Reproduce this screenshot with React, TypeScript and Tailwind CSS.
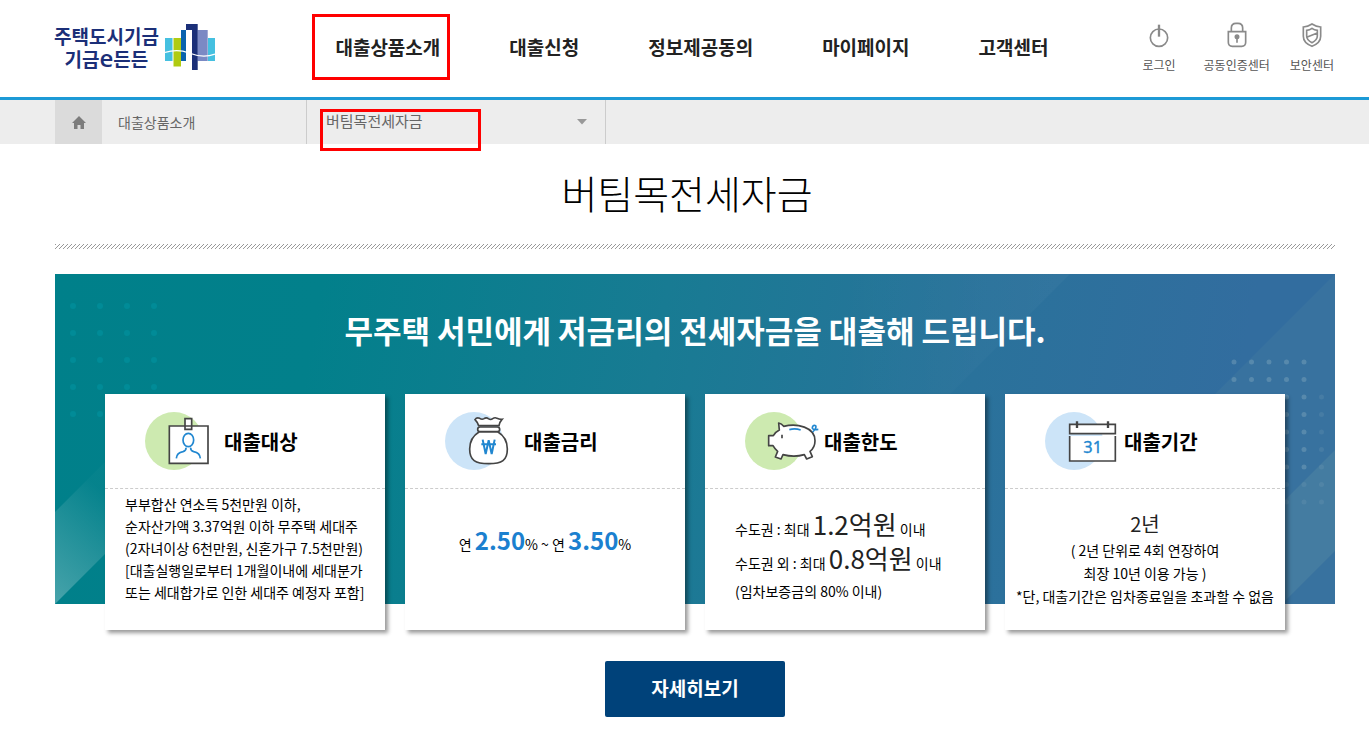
import React from "react";

const NAV_ITEMS = ["대출상품소개", "대출신청", "정보제공동의", "마이페이지", "고객센터"];

const LEFT_DOTS = [0, 1, 2, 3, 4].flatMap((row) =>
  [0, 1, 2, 3].map((col) => ({ x: 18 + col * 27, y: 32 + row * 27 }))
);

const RIGHT_DOTS = [0, 1, 2, 3, 4, 5, 6, 7, 8].flatMap((row) =>
  [0, 1, 2, 3, 4, 5]
    .filter((col) => row > 1 || col < 5)
    .map((col) => ({ x: 399 + col * 17.5, y: 88 + row * 17.5 }))
);

const Logo = () => (
  <a href="#" className="flex items-center gap-1.5 pb-0.5 text-[#1b2f78]">
    <span className="flex flex-col items-center text-[19px] font-bold leading-[23px]">
      <span>주택도시기금</span>
      <span className="flex items-center">
        기금
        <span className="font-['Open_Sans'] text-2xl leading-5 font-semibold">e</span>
        든든
      </span>
    </span>
    <svg viewBox="0 0 50 46" className="w-[50px] h-[46px]" aria-hidden="true">
      <path fill="#45c0e0" d="M0 14h7.5v23H0zM43 14h7v23h-7z" />
      <path fill="#b0cb12" d="M8.5 14H16v28.5H8.5z" />
      <path fill="#0a63ae" d="M16 6h5v31h-5z" />
      <path fill="#7b89c4" d="M32.5 6h10.2v31H32.5z" />
      <path fill="#1b2f78" d="M21 0h11.7v46H27V6h-6z" />
      <path
        fill="none"
        stroke="#fff"
        strokeWidth="1.3"
        d="M0 28.5c8-2.5 15-3 24 .5s17 4.5 26 1"
      />
    </svg>
  </a>
);

type TUtilLink = {
  label: string;
  children: React.ReactNode;
};

const UtilLink = ({ label, children }: TUtilLink) => (
  <a href="#" className="flex flex-col items-center gap-2 text-xs leading-[18px] text-[#555]">
    <svg
      viewBox="0 0 60 78"
      className="w-5 h-[26px]"
      fill="none"
      stroke="#8a8a8a"
      strokeWidth="5"
      aria-hidden="true"
    >
      {children}
    </svg>
    {label}
  </a>
);

const Header = () => (
  <header className="border-b-3 border-[#1c9ad6]">
    <div className="flex items-center h-[97px] pl-[54px] pr-[35px] pb-0.5">
      <Logo />
      <nav className="flex items-center gap-[69px] ml-auto text-[19px] font-bold text-[#222] whitespace-nowrap">
        {NAV_ITEMS.map((item, index) => (
          <a key={item} href="#" className="relative">
            {item}
            {index === 0 && (
              <span className="absolute -left-[23px] -right-2.5 -top-[19px] -bottom-[18px] border-3 border-[#f00]" />
            )}
          </a>
        ))}
      </nav>
      <div className="flex ml-[94px] whitespace-nowrap">
        <UtilLink label="로그인">
          <circle cx="30" cy="47" r="26" />
          <path strokeWidth="7" d="M30 8v36" />
        </UtilLink>
        <div className="ml-7 mr-5">
          <UtilLink label="공동인증센터">
            <path d="M4 29h52v32q0 12-12 12H16Q4 73 4 61z" />
            <path d="M13 29V18Q13 4 27 4h6q14 0 14 14v11" />
            <circle cx="30" cy="44" r="5" fill="#8a8a8a" />
            <path d="M30 44v18" />
          </UtilLink>
        </div>
        <UtilLink label="보안센터">
          <path d="M30 6Q18 14 4 15v28q0 20 26 30 26-10 26-30V15Q42 14 30 6z" />
          <path d="M30 19q-7 5-16 6v17q0 12 16 20 16-8 16-20V25q-9-1-16-6zM14 46l32-13" />
        </UtilLink>
      </div>
    </div>
  </header>
);

const Breadcrumb = () => (
  <nav className="flex h-11 pl-[55px] bg-[#ededed] text-[#666]">
    <a href="#" aria-label="홈" className="flex items-center justify-center w-[47px] bg-[#dbdbdb]">
      <svg viewBox="0 0 14 13" className="w-3.5 h-[13px]" fill="#7c7c7c" aria-hidden="true">
        <path d="M7 0 14 7H12v6H8.5V9h-3v4H2V7H0z" />
      </svg>
    </a>
    <a
      href="#"
      className="flex items-center w-[205px] px-4 border-r border-[#ccc] text-sm"
    >
      대출상품소개
    </a>
    <div className="relative w-[299px] border-r border-[#ccc]">
      <select
        aria-label="대출상품"
        className="w-full h-full pl-[19px] pb-0.5 appearance-none bg-transparent text-[15px]"
      >
        <option>버팀목전세자금</option>
      </select>
      <svg
        viewBox="0 0 10 6"
        className="absolute right-[18px] top-[19px] w-2.5 h-1.5 pointer-events-none"
        fill="#999"
        aria-hidden="true"
      >
        <path d="M0 0h10L5 5.5z" />
      </svg>
      <span className="absolute left-[13px] top-[9px] w-[161px] h-[42px] border-3 border-[#f00] pointer-events-none" />
    </div>
  </nav>
);

const StripeDivider = () => (
  <svg className="block w-full h-[5px]" aria-hidden="true">
    <defs>
      <pattern id="stripes" width="4" height="5" patternUnits="userSpaceOnUse">
        <path
          fill="#999"
          d="M0 0h1v1H0zM3 1h1v1H3zM2 2h1v1H2zM1 3h1v1H1zM0 4h1v1H0z"
        />
      </pattern>
    </defs>
    <rect width="100%" height="5" fill="url(#stripes)" />
  </svg>
);

const BannerBackdrop = () => (
  <div
    className="absolute inset-0 overflow-hidden bg-linear-[100deg,#00808a_0%,#02808b_20%,#187b93_46%,#2a729b_70%,#326d9f_90%,#326d9f_100%]"
    aria-hidden="true"
  >
    <svg className="absolute left-0 top-0 w-[330px] h-[330px]" viewBox="0 0 330 330">
      <defs>
        <linearGradient id="wedge" x1="0" y1="1" x2="0.4" y2="0">
          <stop offset="0" stopColor="#fff" stopOpacity="0.28" />
          <stop offset="0.8" stopColor="#fff" stopOpacity="0.02" />
        </linearGradient>
      </defs>
      <path fill="url(#wedge)" d="M0 238 75 163V255L0 330z" />
      {LEFT_DOTS.map(({ x, y }) => (
        <circle key={`${x}-${y}`} cx={x} cy={y} r="3" fill="#018b97" />
      ))}
    </svg>
    <svg className="absolute right-0 top-0 w-[500px] h-[330px]" viewBox="0 0 500 330">
      <defs>
        <linearGradient id="sheen">
          <stop offset="0" stopColor="#fff" stopOpacity="0" />
          <stop offset="1" stopColor="#fff" stopOpacity="0.03" />
        </linearGradient>
      </defs>
      <path fill="url(#sheen)" d="M0 0h235L115 120H0z" />
      <path fill="#6fa0a8" fillOpacity="0.12" d="M500 0v330H170z" />
      <path fill="#8fc0b0" fillOpacity="0.14" d="M500 176v101l-53 53H346z" />
      {RIGHT_DOTS.map(({ x, y }) => (
        <circle
          key={`${x}-${y}`}
          cx={x}
          cy={y}
          r="2.5"
          fill="#a9c6d0"
          fillOpacity={x > 480 || y > 200 ? 0.12 : 0.28}
        />
      ))}
    </svg>
  </div>
);

type TCard = {
  title: string;
  tint: string;
  icon: React.ReactNode;
  children: React.ReactNode;
};

const Card = ({ title, tint, icon, children }: TCard) => (
  <article className="flex flex-col flex-1 h-[236px] bg-white shadow-[3px_3px_4px_rgba(0,0,0,0.4)] text-sm text-black whitespace-nowrap">
    <div className="flex items-center h-[95px] pl-10 border-b border-dashed border-[#ccc]">
      <svg
        viewBox="135 66 237 174"
        className="w-[79px] h-[58px]"
        fill="#fff"
        stroke="#444"
        strokeWidth="5"
        aria-hidden="true"
      >
        <circle cx="222" cy="153" r="87" fill={tint} stroke="none" />
        {icon}
      </svg>
      <h3 className="pt-0.5 text-xl font-bold">{title}</h3>
    </div>
    {children}
  </article>
);

const PersonIcon = () => (
  <>
    <path d="M208 108h116v112H208zM255 86h20v32h-20z" />
    <g fill="none" stroke="#2187d0">
      <ellipse cx="265" cy="150" rx="16" ry="20" />
      <path d="M258 173q1 9-9 12-19 4-20 20M272 173q-1 9 9 12 19 4 20 20" />
    </g>
  </>
);

const MoneyBagIcon = () => (
  <>
    <path d="M236 107Q233 97 225 89q5-8 14-4 7 5 13 1 7-5 13 0 7 5 13 0 7-5 13-1 8 4 15 3-8 9-9 19z" />
    <path d="M238 125c-20 12-29 29-29 52 0 34 17 44 57 44s56-10 56-44c0-23-9-40-29-52z" />
    <rect x="233" y="111" width="66" height="14" rx="7" />
    <path
      fill="none"
      stroke="#2187d0"
      strokeWidth="6"
      d="M248 149l9 43 9-41 9 41 9-43M244 163h44"
    />
  </>
);

const PiggyIcon = () => (
  <>
    <path
      strokeLinejoin="round"
      d="M206 137h14q6-11 18-17l-2-21q9 2 15 10c40-10 94 2 94 43 0 14-6 25-15 32l7 16-17 7-7-13q-31 9-64 0l-6 13-17-6 7-17q-9-8-14-17h-13z"
    />
    <path d="M246 134v11" />
    <path
      fill="none"
      stroke="#2187d0"
      d="M268 119q17-5 34 1M338 126q13-13 9-19-7-3-10 5-2 9 18 6"
    />
  </>
);

const CalendarIcon = () => (
  <>
    <path d="M209 103h137v28H209zM209 138v75h137v-75" />
    <path d="M231 94v20M324 94v20" strokeWidth="7" />
    <text
      x="278"
      y="190"
      textAnchor="middle"
      fontSize="49"
      className="font-['Noto_Sans']"
      fill="#2187d0"
      stroke="#2187d0"
      strokeWidth="1"
    >
      31
    </text>
  </>
);

const Banner = () => (
  <section className="relative mt-[25px] h-[330px]">
    <BannerBackdrop />
    <div className="relative">
      <h2 className="flex items-center justify-center h-[120px] pb-2 text-[31px] font-bold text-white">
        무주택 서민에게 저금리의 전세자금을 대출해 드립니다.
      </h2>
      <div className="flex gap-5 px-[50px]">
        <Card title="대출대상" tint="#cdeab0" icon={<PersonIcon />}>
          <p className="pl-5 pt-1 leading-[22px]">
            부부합산 연소득 5천만원 이하,
            <br />
            순자산가액 3.37억원 이하 무주택 세대주
            <br />
            (2자녀이상 6천만원, 신혼가구 7.5천만원)
            <br />
            [대출실행일로부터 1개월이내에 세대분가
            <br />
            또는 세대합가로 인한 세대주 예정자 포함]
          </p>
        </Card>
        <Card title="대출금리" tint="#cce4f8" icon={<MoneyBagIcon />}>
          <p className="pt-[35px] text-center">
            연 <strong className="text-2xl text-[#1b80cf]">2.50</strong>% ~ 연{" "}
            <strong className="text-2xl text-[#1b80cf]">3.50</strong>%
          </p>
        </Card>
        <Card title="대출한도" tint="#cdeab0" icon={<PiggyIcon />}>
          <p className="pl-[30px] pt-[22px] leading-[31px]">
            수도권 : 최대 <span className="text-[26px] leading-none text-[#222]">1.2억원</span> 이내
            <br />
            수도권 외 : 최대 <span className="text-[26px] leading-none text-[#222]">0.8억원</span>{" "}
            이내
            <span className="block leading-6">(임차보증금의 80% 이내)</span>
          </p>
        </Card>
        <Card title="대출기간" tint="#cce4f8" icon={<CalendarIcon />}>
          <p className="pt-5 text-center leading-[23px]">
            <span className="block text-xl text-[#222] leading-[30px]">2년</span>
            ( 2년 단위로 4회 연장하여
            <br />
            최장 10년 이용 가능 )
            <br />
            *단, 대출기간은 임차종료일을 초과할 수 없음
          </p>
        </Card>
      </div>
    </div>
  </section>
);

const App = () => {
  return (
    <div className="min-h-screen bg-white font-['Noto_Sans_CJK_KR',sans-serif]">
      <Header />
      <Breadcrumb />
      <main className="pl-[55px] pr-[34px] pb-3">
        <h1 className="flex items-center justify-center h-[100px] pr-4 pb-1 text-[39px] font-light text-black">
          버팀목전세자금
        </h1>
        <StripeDivider />
        <Banner />
        <div className="flex justify-center mt-[57px]">
          <button
            type="button"
            className="w-[180px] h-14 pb-0.5 rounded-xs bg-[#00427a] text-[19px] font-bold text-white"
          >
            자세히보기
          </button>
        </div>
      </main>
    </div>
  );
};

export default App;
